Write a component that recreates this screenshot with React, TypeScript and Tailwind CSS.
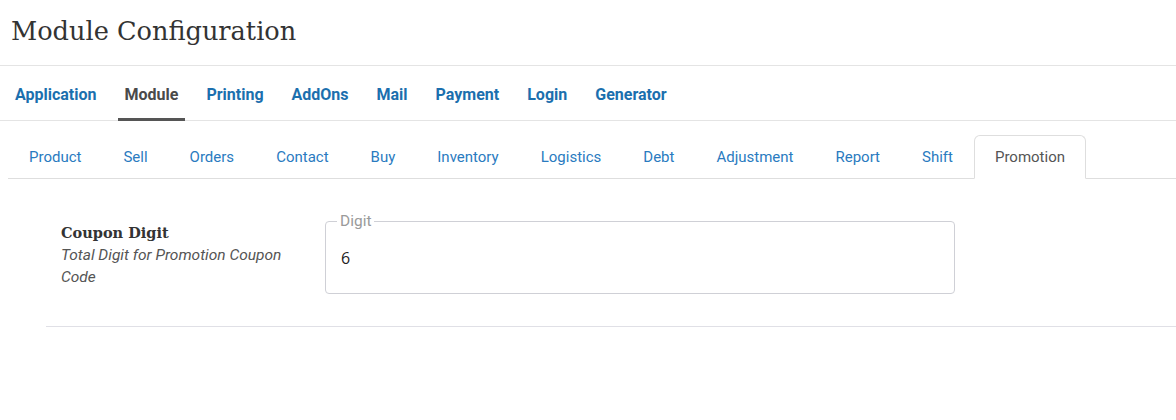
import { useState } from 'react';

const topNav = ['Application', 'Module', 'Printing', 'AddOns', 'Mail', 'Payment', 'Login', 'Generator'];
const subTabs = ['Product', 'Sell', 'Orders', 'Contact', 'Buy', 'Inventory', 'Logistics', 'Debt', 'Adjustment', 'Report', 'Shift', 'Promotion'];

export default function App() {
  const [activeNav, setActiveNav] = useState('Module');
  const [activeTab, setActiveTab] = useState('Promotion');
  const [digit, setDigit] = useState('6');

  return (
    <div className="w-[1176px] h-[420px] bg-white overflow-hidden font-['Roboto',sans-serif]">
      <div className="h-[66px] px-[11px] pt-[13px] border-b border-[#e4e4e4]">
        <h1 className="text-[25.6px] leading-[36px] text-[#333] font-['DejaVu_Serif',serif] font-light">
          Module Configuration
        </h1>
      </div>

      <div className="flex gap-[14px] pl-[8px] h-[55px] border-b border-[#e4e4e4]">
        {topNav.map((item) => (
          <button
            key={item}
            onClick={() => setActiveNav(item)}
            className={`px-[7px] pt-[5px] text-[16px] font-bold border-b-[3px] -mb-px ${
              activeNav === item ? 'text-[#4a4a4a] border-[#555]' : 'text-[#1b6fae] border-transparent'
            }`}
          >
            {item}
          </button>
        ))}
      </div>

      <div className="flex ml-[8px] mt-[14px] h-[44px] border-b border-[#dedede]">
        {subTabs.map((tab) => (
          <button
            key={tab}
            onClick={() => setActiveTab(tab)}
            className={`px-[20px] text-[15px] -mb-px rounded-t-[6px] border ${
              activeTab === tab
                ? 'text-[#555] bg-white border-[#dedede] border-b-white'
                : 'text-[#2a7bbf] border-transparent'
            }`}
          >
            {tab}
          </button>
        ))}
      </div>

      <div className="ml-[46px] mt-[35px] border-b border-[#e0e0e6] pb-[32px]">
        <div className="flex">
          <div className="w-[279px] pl-[15px] pt-[8px]">
            <div className="text-[14.5px] font-bold text-[#333] font-['DejaVu_Serif',serif] leading-[22px]">Coupon Digit</div>
            <div className="w-[236px] text-[15.5px] italic text-[#555] leading-[22px]">
              Total Digit for Promotion Coupon Code
            </div>
          </div>
          <fieldset className="w-[630px] h-[81px] border border-[#cfd0d6] rounded-[4px] px-[15px] -mt-[1px]">
            <legend className="px-[3px] -ml-[4px] text-[15.5px] text-[#9a9a9a] leading-[16px]">Digit</legend>
            <input
              value={digit}
              onChange={(e) => setDigit(e.target.value)}
              className="w-full mt-[17px] text-[16px] text-[#222] font-['Open_Sans',sans-serif] outline-none"
            />
          </fieldset>
        </div>
      </div>
    </div>
  );
}
